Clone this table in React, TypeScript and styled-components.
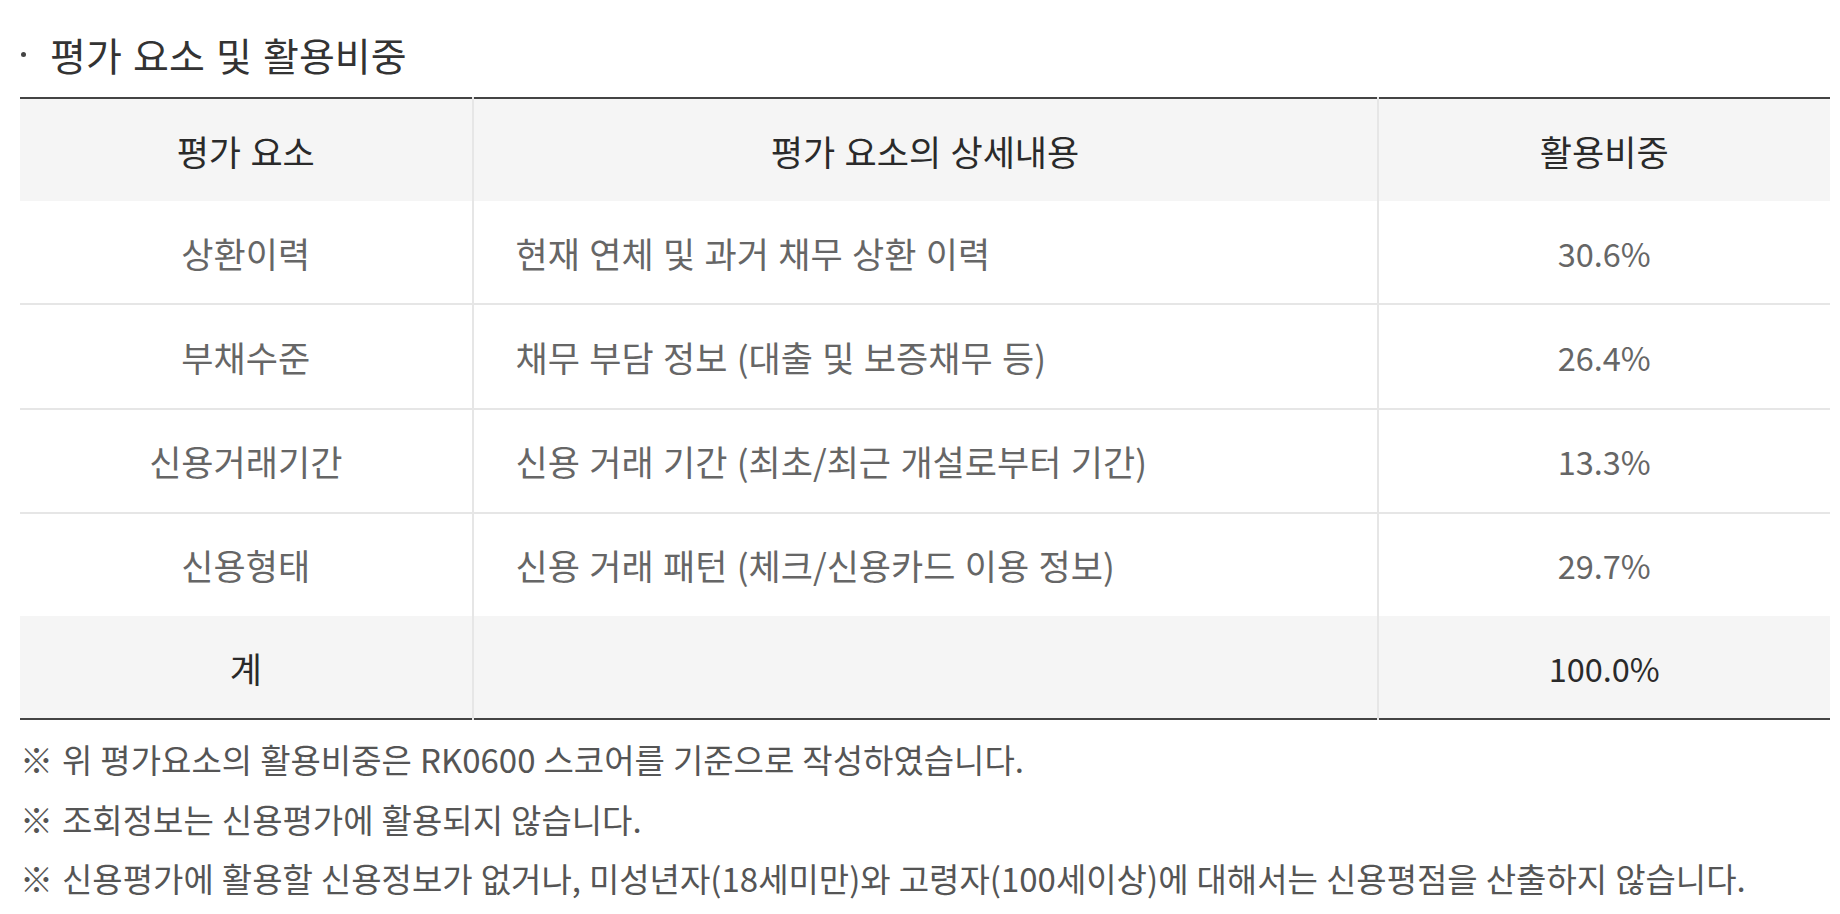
import React from "react";
import styled, { createGlobalStyle } from "styled-components";

const Global = createGlobalStyle`
  html, body { margin: 0; padding: 0; background: #fff; }
  body { font-family: "Noto Sans CJK KR", "Noto Sans", sans-serif; }
`;

const Page = styled.div`
  padding: 27px 10px 0 20px;
`;

const Title = styled.h2`
  display: flex;
  align-items: center;
  margin: 0 0 16px 0;
  font-size: 39px;
  line-height: 54px;
  font-weight: 400;
  color: #333;
  word-spacing: 2.5px;
`;

const Dot = styled.span`
  width: 5px;
  height: 5px;
  border-radius: 50%;
  background: #444;
  margin: 0 24px 0 1px;
  flex: none;
`;

const Table = styled.table`
  width: 100%;
  border-collapse: collapse;
  table-layout: fixed;
  border-top: 2px solid #444;
  border-bottom: 2px solid #444;
`;

const Row = styled.tr<{ $shade?: boolean }>`
  background: ${(p) => (p.$shade ? "#f5f5f5" : "#fff")};
  & + & > * { border-top: 2px solid #e6e6e6; }
`;

const Cell = styled.td<{ $align?: "left" | "center"; $dark?: boolean; $num?: boolean }>`
  height: 102.2px;
  padding: 0;
  padding-left: ${(p) => (p.$align === "left" ? "42px" : "0")};
  text-align: ${(p) => p.$align ?? "center"};
  vertical-align: middle;
  font-size: ${(p) => (p.$num ? "32.5px" : "35px")};
  font-weight: 400;
  color: ${(p) => (p.$dark ? "#2a2a2a" : "#666")};
  word-spacing: 1.5px;
  & + & { border-left: 2px solid #e6e6e6; }
`;

const HeadCell = styled(Cell).attrs({ as: "th" })``;

const Notes = styled.div`
  margin-top: 10px;
`;

const Note = styled.p`
  margin: 0;
  font-size: 33px;
  line-height: 59.5px;
  color: #555;
  word-spacing: 0.6px;
`;

const Mark = styled.span`
  margin-right: 1px;
`;

const rows = [
  ["상환이력", "현재 연체 및 과거 채무 상환 이력", "30.6%"],
  ["부채수준", "채무 부담 정보 (대출 및 보증채무 등)", "26.4%"],
  ["신용거래기간", "신용 거래 기간 (최초/최근 개설로부터 기간)", "13.3%"],
  ["신용형태", "신용 거래 패턴 (체크/신용카드 이용 정보)", "29.7%"],
];

const notes = [
  "위 평가요소의 활용비중은 RK0600 스코어를 기준으로 작성하였습니다.",
  "조회정보는 신용평가에 활용되지 않습니다.",
  "신용평가에 활용할 신용정보가 없거나, 미성년자(18세미만)와 고령자(100세이상)에 대해서는 신용평점을 산출하지 않습니다.",
];

export default function App() {
  return (
    <Page>
      <Global />
      <Title>
        <Dot />
        평가 요소 및 활용비중
      </Title>
      <Table>
        <colgroup>
          <col style={{ width: "25%" }} />
          <col style={{ width: "50%" }} />
          <col style={{ width: "25%" }} />
        </colgroup>
        <thead>
          <Row $shade>
            <HeadCell $dark>평가 요소</HeadCell>
            <HeadCell $dark>평가 요소의 상세내용</HeadCell>
            <HeadCell $dark>활용비중</HeadCell>
          </Row>
        </thead>
        <tbody>
          {rows.map((r) => (
            <Row key={r[0]}>
              <Cell>{r[0]}</Cell>
              <Cell $align="left">{r[1]}</Cell>
              <Cell $num>{r[2]}</Cell>
            </Row>
          ))}
          <Row $shade>
            <Cell $dark>계</Cell>
            <Cell />
            <Cell $dark $num>100.0%</Cell>
          </Row>
        </tbody>
      </Table>
      <Notes>
        {notes.map((n) => (
          <Note key={n}>
            <Mark>※</Mark> {n}
          </Note>
        ))}
      </Notes>
    </Page>
  );
}
